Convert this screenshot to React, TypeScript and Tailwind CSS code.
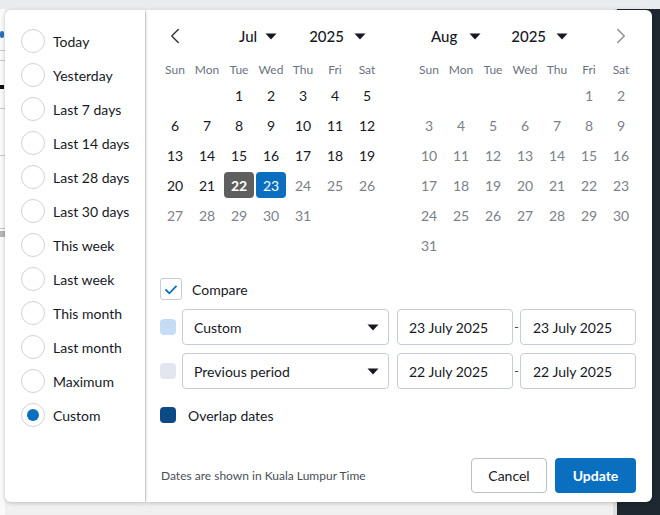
import { ChevronLeft, ChevronRight } from "lucide-react";

const presets = [
  "Today",
  "Yesterday",
  "Last 7 days",
  "Last 14 days",
  "Last 28 days",
  "Last 30 days",
  "This week",
  "Last week",
  "This month",
  "Last month",
  "Maximum",
  "Custom",
];

const weekdays = ["Sun", "Mon", "Tue", "Wed", "Thu", "Fri", "Sat"];

function Caret({ className = "" }: { className?: string }) {
  return (
    <svg width="12" height="7" viewBox="0 0 12 7" className={className}>
      <path d="M0.5 0.5h11L6 6.5z" fill="#16191f" />
    </svg>
  );
}

function MonthGrid({ offset, days, activeUntil }: { offset: number; days: number; activeUntil: number }) {
  const cells: (number | null)[] = [];
  for (let i = 0; i < offset; i++) cells.push(null);
  for (let d = 1; d <= days; d++) cells.push(d);
  while (cells.length < 42) cells.push(null);

  return (
    <div className="grid grid-cols-7 w-[224px]">
      {weekdays.map((w) => (
        <div key={w} className="h-[21px] flex items-center justify-center text-[12px] text-[#6b7280]">
          {w}
        </div>
      ))}
      {cells.map((d, i) => {
        if (d === null) return <div key={i} className="h-[30px]" />;
        const isStart = activeUntil > 0 && d === 22;
        const isEnd = activeUntil > 0 && d === 23;
        const muted = d > activeUntil;
        return (
          <div key={i} className="h-[30px] flex items-center justify-center px-px">
            {isStart ? (
              <span className="w-full h-[26px] rounded-[4px] bg-[#5f5f5f] text-white font-bold flex items-center justify-center text-[14px]">
                {d}
              </span>
            ) : isEnd ? (
              <span className="w-full h-[26px] rounded-[4px] bg-[#0b6fbf] text-white flex items-center justify-center text-[14px]">
                {d}
              </span>
            ) : (
              <span className={`text-[14px] ${muted ? "text-[#7b8187]" : "text-[#16191f]"}`}>{d}</span>
            )}
          </div>
        );
      })}
    </div>
  );
}

export default function App() {
  return (
    <div className="relative w-[660px] h-[515px] overflow-hidden bg-[#f0f0f0] font-['Lato','Noto_Sans',sans-serif] text-[#16191f]">
      {/* page behind the popover */}
      <div className="h-[9px] bg-[#e8ecef]" />
      <div className="flex h-[506px]">
        <div className="w-[5px] flex flex-col bg-[#fafafa]">
          <div className="h-[22px]" />
          <div className="h-[7px] w-[4px] bg-[#2a6fb3] rounded-sm" />
          <div className="h-[12px]" />
          <div className="h-px bg-[#c3c8cd]" />
          <div className="h-[9px]" />
          <div className="h-px bg-[#c3c8cd]" />
          <div className="h-[24px]" />
          <div className="h-[4px] w-[4px] bg-[#111]" />
          <div className="h-[19px]" />
          <div className="h-px bg-[#c3c8cd]" />
          <div className="h-[46px]" />
          <div className="h-px bg-[#c3c8cd]" />
          <div className="h-[72px]" />
          <div className="h-px bg-[#c3c8cd]" />
          <div className="h-[2px]" />
          <div className="h-[6px] bg-[#b5b5b5]" />
        </div>
        <div className="flex-1" />
        <div className="w-[4px] bg-[#dedede]" />
        <div className="w-[43px] bg-[#1d2830]" />
      </div>

      {/* popover */}
      <div className="absolute left-[5px] top-[10px] w-[647px] h-[492px] flex">
        <aside className="w-[140px] bg-white rounded-l-[6px] shadow-[0_1px_4px_rgba(0,0,0,0.22)] pt-[14px] pl-[16px] flex flex-col relative z-10">
          {presets.map((p) => (
            <label key={p} className="h-[34px] flex items-center gap-[8px] text-[14px]">
              <span className="w-[24px] h-[24px] rounded-full border border-[#ccd3da] flex items-center justify-center bg-white">
                {p === "Custom" && <span className="w-[12px] h-[12px] rounded-full bg-[#0b6fbf]" />}
              </span>
              <span>{p}</span>
            </label>
          ))}
        </aside>

        <section className="flex-1 bg-white rounded-r-[6px] shadow-[0_1px_4px_rgba(0,0,0,0.22)] ml-px flex flex-col">
          {/* calendars */}
          <div className="flex gap-[30px] pl-[13px] pt-[10px]">
            <div>
              <div className="h-[32px] flex items-center mb-[7px]">
                <button className="w-[32px] flex justify-center text-[#333]">
                  <ChevronLeft size={26} strokeWidth={1.3} />
                </button>
                <div className="ml-[48px] flex items-center gap-[8px] text-[15px] font-medium">
                  <span>Jul</span>
                  <Caret />
                </div>
                <div className="ml-[32px] flex items-center gap-[10px] text-[15px] font-medium">
                  <span>2025</span>
                  <Caret />
                </div>
              </div>
              <MonthGrid offset={2} days={31} activeUntil={23} />
            </div>
            <div>
              <div className="h-[32px] flex items-center mb-[7px]">
                <div className="ml-[18px] flex items-center gap-[12px] text-[15px] font-medium">
                  <span>Aug</span>
                  <Caret />
                </div>
                <div className="ml-[30px] flex items-center gap-[10px] text-[15px] font-medium">
                  <span>2025</span>
                  <Caret />
                </div>
                <button className="ml-auto w-[32px] flex justify-center text-[#8a8f95]">
                  <ChevronRight size={26} strokeWidth={1.3} />
                </button>
              </div>
              <MonthGrid offset={5} days={31} activeUntil={0} />
            </div>
          </div>

          {/* compare */}
          <div className="pl-[14px] pr-[16px] mt-[18px] flex flex-col">
            <label className="h-[22px] flex items-center gap-[10px] text-[14px]">
              <span className="w-[22px] h-[22px] rounded-[3px] border border-[#c7cdd4] flex items-center justify-center">
                <svg width="14" height="11" viewBox="0 0 14 11">
                  <path d="M1.5 5.5l3.8 3.8L12.5 1.8" fill="none" stroke="#0b6fbf" strokeWidth="1.8" />
                </svg>
              </span>
              Compare
            </label>

            {[
              { dot: "bg-[#c4ddf5]", label: "Custom", from: "23 July 2025", to: "23 July 2025" },
              { dot: "bg-[#e4e6ef]", label: "Previous period", from: "22 July 2025", to: "22 July 2025" },
            ].map((r, i) => (
              <div key={r.label} className={`flex items-center h-[36px] ${i === 0 ? "mt-[9px]" : "mt-[8px]"}`}>
                <span className={`w-[16px] h-[16px] rounded-[4px] ${r.dot}`} />
                <div className="ml-[6px] w-[207px] h-[36px] rounded-[4px] border border-[#c7cdd4] flex items-center justify-between pl-[11px] pr-[9px] text-[14px]">
                  <span>{r.label}</span>
                  <Caret />
                </div>
                <div className="ml-[8px] w-[116px] h-[36px] rounded-[4px] border border-[#c7cdd4] flex items-center pl-[11px] text-[14px]">
                  {r.from}
                </div>
                <span className="w-[7px] text-center text-[12px] text-[#333]">-</span>
                <div className="w-[116px] h-[36px] rounded-[4px] border border-[#c7cdd4] flex items-center pl-[12px] text-[14px]">
                  {r.to}
                </div>
              </div>
            ))}

            <div className="mt-[18px] h-[16px] flex items-center gap-[12px] text-[14px]">
              <span className="w-[16px] h-[16px] rounded-[4px] bg-[#0c4a86]" />
              Overlap dates
            </div>
          </div>

          {/* footer */}
          <div className="mt-auto mb-[9px] pl-[15px] pr-[16px] flex items-center">
            <span className="text-[12px] text-[#4a4f55]">Dates are shown in Kuala Lumpur Time</span>
            <button className="ml-auto w-[76px] h-[35px] rounded-[4px] border border-[#b8bfc6] bg-white text-[14px]">
              Cancel
            </button>
            <button className="ml-[8px] w-[81px] h-[35px] rounded-[4px] bg-[#0b6fbf] text-white font-bold text-[14px]">
              Update
            </button>
          </div>
        </section>
      </div>
    </div>
  );
}
